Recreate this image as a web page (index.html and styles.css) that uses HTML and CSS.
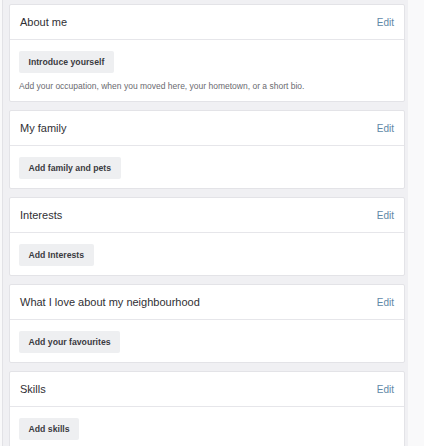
FILE: index.html
```html
<!DOCTYPE html>
<html lang="en">
<head>
<meta charset="utf-8">
<title>Profile</title>
<link rel="stylesheet" href="styles.css">
</head>
<body>
<div class="page">
  <section class="card">
    <div class="card-head"><h2 class="card-title">About me</h2><a class="edit" href="#">Edit</a></div>
    <div class="card-body">
      <button class="pill">Introduce yourself</button>
      <p class="hint">Add your occupation, when you moved here, your hometown, or a short bio.</p>
    </div>
  </section>
  <section class="card">
    <div class="card-head"><h2 class="card-title">My family</h2><a class="edit" href="#">Edit</a></div>
    <div class="card-body"><button class="pill">Add family and pets</button></div>
  </section>
  <section class="card">
    <div class="card-head"><h2 class="card-title">Interests</h2><a class="edit" href="#">Edit</a></div>
    <div class="card-body"><button class="pill">Add Interests</button></div>
  </section>
  <section class="card">
    <div class="card-head"><h2 class="card-title">What I love about my neighbourhood</h2><a class="edit" href="#">Edit</a></div>
    <div class="card-body"><button class="pill">Add your favourites</button></div>
  </section>
  <section class="card">
    <div class="card-head"><h2 class="card-title">Skills</h2><a class="edit" href="#">Edit</a></div>
    <div class="card-body"><button class="pill">Add skills</button></div>
  </section>
</div>
</body>
</html>
```
FILE: styles.css
```css
html, body {
  margin: 0;
  padding: 0;
  background: #f9f9fa;
  font-family: "Liberation Sans", Arial, sans-serif;
  height: 446px;
  overflow: hidden;
}
.page {
  box-sizing: border-box;
  margin-left: 2px;
  width: 406px;
  min-height: 446px;
  border-left: 1px solid #e2e2e6;
  background: #f0f0f3;
  padding: 4px 3px 0 6px;
  display: flex;
  flex-direction: column;
  gap: 8px;
}
.card {
  background: #ffffff;
  border: 1px solid #e3e3e7;
  border-radius: 2px;
}
.card-head {
  height: 34px;
  display: flex;
  align-items: center;
  justify-content: space-between;
  padding: 0 10px 0 10px;
  border-bottom: 1px solid #e6e6ea;
}
.card-title {
  margin: 0;
  font-size: 11px;
  font-weight: normal;
  color: #2f2f34;
}
.edit {
  font-size: 10px;
  color: #5e88a6;
  text-decoration: none;
}
.card-body {
  padding: 11px 9px 9px 9px;
}
.pill {
  display: block;
  height: 22px;
  padding: 0 9.5px;
  border: 0;
  border-radius: 2px;
  background: #eeeff1;
  font-family: "Liberation Sans", Arial, sans-serif;
  font-size: 8.7px;
  font-weight: bold;
  color: #3a3a3f;
}
.hint {
  margin: 8px 0 1px 0;
  font-size: 8.5px;
  line-height: 10px;
  color: #6a6a70;
}
```
